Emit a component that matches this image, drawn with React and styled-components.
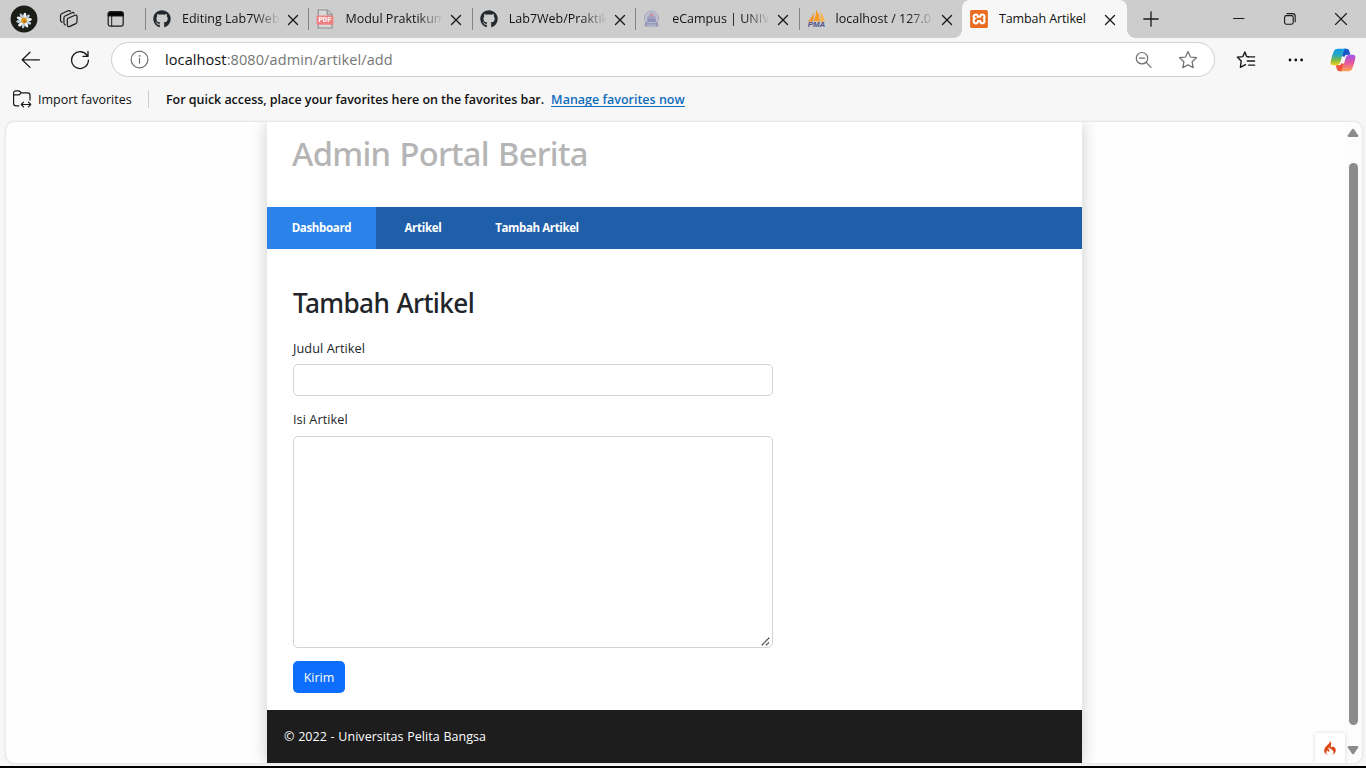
import React from "react";
import styled, { createGlobalStyle, css } from "styled-components";
import { FaGithub } from "react-icons/fa";
import { SiCodeigniter, SiXampp } from "react-icons/si";

const Global = createGlobalStyle`
  * { box-sizing: border-box; }
  html, body, #root { margin: 0; height: 100%; }
  body { overflow: hidden; background: #f7f7f7; color: #111; font-family: "Open Sans", "Noto Sans", sans-serif; }
  h1, h2, p { margin: 0; }
  svg { display: block; flex: none; }
`;

/* ---------- browser window ---------- */

const Window = styled.div`
  width: 1366px;
  height: 768px;
  display: flex;
  flex-direction: column;
  background: #f7f7f7;
  border-bottom: 2px solid #000;
`;

const TabStrip = styled.header`
  height: 38px;
  flex: none;
  display: flex;
  align-items: center;
  background: #cdcdcd;
`;

const StripTools = styled.div`
  width: 145px;
  padding-left: 10px;
  display: flex;
  align-items: center;
`;

const Tool = styled.span`
  margin-left: ${(p) => p.$gap}px;
`;

const Tab = styled.div`
  width: ${(p) => (p.$active ? 165 : 163.4)}px;
  height: 38px;
  display: flex;
  align-items: center;
  position: relative;
  padding-left: 7px;
  ${(p) =>
    p.$active
      ? css`
          background: #f7f7f7;
          border-radius: 8px 8px 0 0;
          &::before,
          &::after {
            content: "";
            position: absolute;
            bottom: 0;
            width: 8px;
            height: 8px;
          }
          &::before {
            left: -8px;
            background: radial-gradient(circle at 0 0, #cdcdcd 7.5px, #f7f7f7 8px);
          }
          &::after {
            right: -8px;
            background: radial-gradient(circle at 100% 0, #cdcdcd 7.5px, #f7f7f7 8px);
          }
        `
      : css`
          &::before {
            content: "";
            position: absolute;
            left: 0;
            top: 8px;
            width: 1px;
            height: 22px;
            background: #858585;
          }
        `}
`;

const TabIcon = styled.span`
  width: 20px;
  height: 20px;
  display: grid;
  place-items: center;
  color: #24292f;
`;

const TabTitle = styled.span`
  margin-left: 10px;
  width: 97px;
  overflow: hidden;
  white-space: nowrap;
  font-size: 12.5px;
  line-height: 20px;
  letter-spacing: ${(p) => p.$track || 0}px;
  color: #111;
  ${(p) =>
    p.$fade &&
    css`
      mask-image: linear-gradient(90deg, #000 72px, transparent 98px);
    `}
`;

const TabClose = styled.span`
  margin-left: 8px;
  display: grid;
  padding-top: 1px;
`;

const NewTab = styled.div`
  width: 48px;
  display: grid;
  place-items: center;
`;

const WindowButtons = styled.div`
  margin-left: auto;
  display: grid;
  grid-template-columns: repeat(3, 51px);
  place-items: center;
  padding-bottom: 1px;
`;

const Toolbar = styled.div`
  height: 43px;
  flex: none;
  display: flex;
  align-items: center;
  padding-left: 20px;
`;

const NavButtons = styled.div`
  width: 91px;
  display: flex;
  gap: 29px;
`;

const AddressBar = styled.div`
  width: 1104px;
  height: 35px;
  display: flex;
  align-items: center;
  padding: 0 16px 0 18px;
  border: 1px solid #cfcfcf;
  border-radius: 18px;
  background: #fff;
`;

const Url = styled.span`
  margin-left: 16px;
  flex: 1;
  font-size: 14.5px;
  line-height: 20px;
  letter-spacing: 0.1px;
  color: #767676;
  b {
    font-weight: 400;
    color: #111;
  }
`;

const AddressActions = styled.div`
  display: flex;
  align-items: center;
  gap: 25px;
`;

const ToolbarActions = styled.div`
  flex: 1;
  padding-left: 21px;
  display: flex;
  align-items: center;
`;

const FavoritesBar = styled.div`
  height: 40px;
  flex: none;
  display: flex;
  align-items: center;
  padding: 0 0 4px 12px;
  font-size: 12.5px;
  color: #111;
`;

const ImportFavorites = styled.span`
  margin-left: 6px;
  width: 110px;
`;

const Divider = styled.span`
  width: 1px;
  height: 18px;
  background: #cdcdcd;
`;

const FavoritesHint = styled.span`
  margin-left: 17px;
  font-weight: 600;
  letter-spacing: -0.035px;
`;

const FavoritesLink = styled.a`
  margin-left: 7px;
  height: 15px;
  line-height: 15px;
  font-weight: 600;
  color: #0f6cbd;
  border-bottom: 1px solid #0f6cbd;
`;

const Viewport = styled.div`
  position: relative;
  flex: 1;
  min-height: 0;
  margin: 0 3px 2px 5px;
  display: flex;
  overflow: hidden;
  border: 1px solid #e9e9e9;
  border-radius: 10px;
  background: #fefefe;
  box-shadow: 0 0 2px rgba(0, 0, 0, 0.1);
`;

const ScrollBar = styled.div`
  width: 17px;
  display: flex;
  flex-direction: column;
  align-items: center;
  padding: 6px 1px 7px 0;
  background: #fcfcfc;
`;

const ScrollThumb = styled.div`
  width: 9px;
  height: 562px;
  margin: 25px 0 20px;
  border-radius: 5px;
  background: #8b8b8b;
`;

const DebugBadge = styled.div`
  position: absolute;
  right: 17px;
  bottom: 0;
  width: 30px;
  height: 30px;
  display: grid;
  place-items: center;
  background: #fff;
  color: #dd4814;
  box-shadow: 0 0 4px rgba(0, 0, 0, 0.15);
`;

/* ---------- page ---------- */

const Document = styled.div`
  flex: 1;
  display: flex;
  padding-left: 261px;
`;

const Page = styled.div`
  width: 815px;
  display: flex;
  flex-direction: column;
  background: #fff;
  box-shadow: 0 0 16px rgba(0, 0, 0, 0.2);
`;

const PageHeader = styled.div`
  height: 85px;
  padding: 10px 25px;
`;

const SiteTitle = styled.h1`
  font: 500 32.7px/44px "Noto Sans", sans-serif;
  letter-spacing: -0.72px;
  word-spacing: 1.3px;
  color: #b5b5b5;
`;

const NavBar = styled.nav`
  height: 42px;
  display: flex;
  background: #1f5faa;
`;

const NavLink = styled.a`
  width: ${(p) => p.$width}px;
  display: flex;
  align-items: center;
  justify-content: center;
  padding-bottom: 2px;
  font-size: 11.5px;
  font-weight: 700;
  letter-spacing: ${(p) => p.$track}px;
  color: #fff;
  background: ${(p) => (p.$active ? "#2b83ea" : "transparent")};
`;

const Main = styled.main`
  height: 461px;
  padding: 35px 26px 0;
`;

const Heading = styled.h2`
  font: 500 26.2px/38px "Noto Sans", sans-serif;
  letter-spacing: -0.63px;
  word-spacing: 1px;
  color: #212529;
`;

const Field = styled.div`
  display: flex;
  flex-direction: column;
  margin-top: ${(p) => p.$gap}px;
`;

const FieldLabel = styled.label`
  height: 20px;
  line-height: 20px;
  margin-bottom: ${(p) => p.$below}px;
  font-size: 12.7px;
  letter-spacing: 0.07px;
  color: #212529;
`;

const control = css`
  width: 480px;
  border: 1px solid #ced4da;
  border-radius: 5px;
  background: #fff;
`;

const Input = styled.input`
  ${control}
  height: 32px;
`;

const TextAreaFrame = styled.div`
  ${control}
  height: 212px;
  display: flex;
  align-items: flex-end;
  justify-content: flex-end;
  padding: 0 2px 1px 0;
`;

const Submit = styled.button`
  display: block;
  width: 52px;
  height: 32px;
  margin-top: 13px;
  padding: 1px 0 0;
  border: 0;
  border-radius: 5px;
  background: #0d6efd;
  color: #fff;
  font: 12.5px "Open Sans", sans-serif;
`;

const Footer = styled.footer`
  flex: 1;
  display: flex;
  align-items: center;
  padding-left: 17px;
  background: #1d1d1d;
  color: #fff;
  font-size: 12.5px;
  letter-spacing: 0.04px;
  word-spacing: 0.4px;
`;

/* ---------- icons ---------- */

const Line = styled.svg`
  fill: none;
  stroke: ${(p) => p.$color || "#1a1a1a"};
  stroke-width: ${(p) => p.$weight || 1.2};
  stroke-linecap: round;
  stroke-linejoin: round;
`;

const Avatar = () => (
  <svg width="28" height="28" viewBox="0 0 28 28">
    <circle cx="14" cy="14" r="13.4" fill="#1b1d17" />
    {[0, 36, 72, 108, 144, 180, 216, 252, 288, 324].map((a) => (
      <ellipse key={a} cx="14" cy="10.2" rx="1.5" ry="3.6" fill={a % 72 ? "#b5cbdc" : "#f4f5f2"} transform={`translate(0 1) rotate(${a + 8} 14 14.5)`} />
    ))}
    <circle cx="14" cy="15.5" r="3" fill="#e2a01c" />
    <circle cx="14.5" cy="16.3" r="1.5" fill="#bd7410" />
  </svg>
);

const Workspaces = () => (
  <Line width="20" height="20" viewBox="0 0 20 20">
    <path d="M9.1 9.2 15.9 6.2Q18 5.4 18 7.6V12.6Q18 14 16.8 14.6L10.8 17.4Q8.3 18.2 8.3 15.8V10.6Q8.3 9.6 9.1 9.2Z" />
    <path d="M6.2 16Q4.9 15.3 4.9 13.8V8.8Q4.9 7.6 6 7L13 3.7Q14.5 3.1 15 4.2" />
    <path d="M3 13.3Q1.5 12.5 1.5 11V6.6Q1.5 5.4 2.6 4.8L9 1.8Q10.8 1.1 11.4 2.4" />
  </Line>
);

const TabActions = () => (
  <Line width="18" height="18" viewBox="0 0 18 18">
    <rect x="1.2" y="1.8" width="15" height="14.4" rx="2.2" />
    <path d="M1.2 6V4Q1.2 1.8 3.4 1.8H14Q16.2 1.8 16.2 4V6Z" fill="#000" />
    <path d="M4.7 6V16" strokeWidth="1" />
  </Line>
);

const Cross = ({ size = 10, weight = 1.4 }) => (
  <Line width={size + 2} height={size + 2} viewBox={`-1 -1 ${size + 2} ${size + 2}`} $weight={weight}>
    <path d={`M0.5 0.5 ${size - 0.5} ${size - 0.5}M${size - 0.5} 0.5 0.5 ${size - 0.5}`} />
  </Line>
);

const Plus = () => (
  <Line width="16" height="16" viewBox="0 0 16 16" $weight={1.3}>
    <path d="M8 .8V15.2M.8 8H15.2" />
  </Line>
);

const Minimize = () => (
  <Line width="12" height="12" viewBox="0 0 12 12" $weight={1}>
    <path d="M.5 5.5H11" />
  </Line>
);

const Restore = () => (
  <Line width="12" height="12" viewBox="0 0 12 12" $weight={1.1}>
    <rect x=".6" y="2.6" width="8.6" height="8.6" rx="1.6" />
    <path d="M3 .6H8.6Q11.2 .6 11.2 3.2V8.7" />
  </Line>
);

const PdfIcon = () => (
  <svg width="18" height="20" viewBox="0 0 18 20">
    <path d="M2.2 1H11.4L16 5.6V19H2.2Z" fill="#d9d9d9" stroke="#8b8b8b" strokeWidth="1.1" />
    <path d="M11.2 1V5.8H16" fill="#c9c9c9" stroke="#8b8b8b" strokeWidth="1.1" />
    <rect x=".6" y="6.6" width="16.8" height="9.2" rx="1" fill="#ef8082" />
    <text x="9" y="13.4" textAnchor="middle" fontSize="6.4" fontWeight="700" fontFamily="Liberation Mono" fill="#fff" textLength="13" lengthAdjust="spacingAndGlyphs">PDF</text>
  </svg>
);

const CampusCrest = () => (
  <svg width="18" height="18" viewBox="0 0 18 18">
    <circle cx="8.5" cy="8" r="7" fill="#c3c3cf" stroke="#a8a8be" strokeWidth="1" />
    <circle cx="8.5" cy="7" r="4.3" fill="#b5b5cb" />
    <path d="M8.5 2 10 5.5 13.6 7.7H3.4L7 5.5Z" fill="#9c9cbc" />
    <circle cx="8.5" cy="5.2" r="1.2" fill="#dc8c86" />
    <path d="M4.3 8.4H12.8V12H4.3Z" fill="#8e90b6" />
    <path d="M2.4 11.8Q8.5 14.3 14.6 11.8L15.6 16.6H1.4Z" fill="#9597bb" />
    <path d="M4 15.1H13" stroke="#c8c8d8" strokeWidth=".8" />
  </svg>
);

const PmaIcon = () => (
  <svg width="20" height="20" viewBox="0 0 20 20">
    <path d="M7.6 3.2Q8.6 8 6.6 12H2Q6 9 7.6 3.2Z" fill="#f0922c" />
    <path d="M10 1Q14.4 5.5 13.4 12H7.3Q10.3 7 10 1Z" fill="#f89c27" />
    <path d="M14.2 2.5Q18 7 18.8 12H14.1Q15.2 7 14.2 2.5Z" fill="#fab252" />
    <path d="M2 12.6Q10 11.2 18.6 12.7" stroke="#dfa05b" strokeWidth=".7" fill="none" />
    <text x="10.4" y="18.4" textAnchor="middle" fontSize="6.8" fontWeight="700" fontStyle="italic" fontFamily="Liberation Sans" fill="#4f5289" textLength="17.5" lengthAdjust="spacingAndGlyphs">PMA</text>
  </svg>
);

const XamppTile = styled.span`
  width: 18px;
  height: 18px;
  display: grid;
  place-items: center;
  border-radius: 2px;
  background: #fff;
  color: #ea6c20;
`;

const Back = () => (
  <Line width="21" height="20" viewBox="0 0 21 20" $weight={1.3}>
    <path d="M10 2.2 2.2 9.8 10 17.4M2.2 9.8H19.5" />
  </Line>
);

const Reload = () => (
  <Line width="20" height="20" viewBox="0 0 20 20" $weight={1.3}>
    <path d="M17.4 6.1A8.4 8.4 0 1 0 18.4 10.2M18 1.5V6.4H13" />
  </Line>
);

const Info = () => (
  <Line width="19" height="19" viewBox="0 0 19 19" $color="#6e6e6e">
    <circle cx="9.5" cy="9.5" r="8.4" />
    <path d="M9.5 8.4V13.2" />
    <circle cx="9.5" cy="5.9" r=".5" fill="#6e6e6e" strokeWidth=".6" />
  </Line>
);

const ZoomOut = () => (
  <Line width="18" height="18" viewBox="0 0 18 18" $color="#6e6e6e">
    <circle cx="7" cy="7.2" r="5.7" />
    <path d="M4.4 7.2H9.6M11.2 11.4 16 16.3" />
  </Line>
);

const starPath = "M10 1.6 12.5 7 18.4 7.7 14.1 11.8 15.2 17.6 10 14.8 4.8 17.6 5.9 11.8 1.6 7.7 7.5 7Z";

const Star = () => (
  <Line width="20" height="20" viewBox="0 0 20 20" $color="#6e6e6e">
    <path d={starPath} />
  </Line>
);

const Collections = () => (
  <Line width="20" height="20" viewBox="0 0 20 20" $weight={1.4}>
    <path d="M12.4 6.8 10.6 6.6 8.9 2 6.8 6.6 1.4 7.3 5.2 11 4.4 17.3 9.4 14.6" />
    <path d="M12.6 6.9H18.6M11.4 11H18.6M12.6 15.1H18.6" />
  </Line>
);

const Dots = () => (
  <svg width="16" height="4" viewBox="0 0 16 4">
    {[2, 7.8, 13.6].map((x) => <circle key={x} cx={x} cy="2" r="1.4" fill="#111" />)}
  </svg>
);

const Copilot = () => (
  <svg width="26" height="24" viewBox="0 0 26 24">
    <defs>
      <linearGradient id="cool" x1="0" y1="0" x2="0" y2="1">
        <stop offset="0" stopColor="#149bea" />
        <stop offset=".4" stopColor="#29a9b8" />
        <stop offset=".7" stopColor="#84b93e" />
        <stop offset="1" stopColor="#f4cf1c" />
      </linearGradient>
      <linearGradient id="warm" x1="0" y1="0" x2="0" y2="1">
        <stop offset="0" stopColor="#a052ee" />
        <stop offset=".5" stopColor="#e6589c" />
        <stop offset="1" stopColor="#ffa34f" />
      </linearGradient>
    </defs>
    <path d="M14 .8H16.6Q18.6 .8 19.2 2.8L20.4 6.8H17Q15 6.8 14.3 9L12 8Z" fill="#1756c4" />
    <path d="M12 23.2H9.4Q7.4 23.2 6.8 21L5.7 17.2H9Q11 17.2 11.7 15L14 16Z" fill="#f0533e" />
    <path d="M7.7.8H16.2Q14.2 1 13.5 3.2L10.2 14.6Q9.4 17.2 6.8 17.2H3.2Q0 17.2.7 13.4Q2 7.3 4 2.8Q5 .8 7.7.8Z" fill="url(#cool)" />
    <path d="M18.3 23.2H9.8Q11.8 23 12.5 20.8L15.8 9.4Q16.6 6.8 19.2 6.8H22.8Q26 6.8 25.3 10.6Q24 16.7 22 21.2Q21 23.2 18.3 23.2Z" fill="url(#warm)" />
  </svg>
);

const ImportFolder = () => (
  <Line width="20" height="20" viewBox="0 0 20 20">
    <path d="M6.8 16.9H4Q1.6 16.9 1.6 14.5V4.2Q1.6 1.8 4 1.8H6.4Q7.4 1.8 8 2.5L9.3 3.8H15.6Q18 3.8 18 6.2V11.2M1.8 5.8H6.3Q7.4 5.8 8 5.1L9.3 3.8" />
    <path d="M9.6 15.5H18.4M11.5 13.2 9.3 15.5 11.5 17.8M16.5 13.2 18.7 15.5 16.5 17.8" />
  </Line>
);

const Arrow = ({ down }) => (
  <svg width="12" height="10" viewBox="0 0 12 10">
    <path
      d="M5 1.2Q6 .2 7 1.2L11.3 7.4Q11.6 9 10.4 9H1.6Q.4 9 .7 7.4Z"
      fill="#8b8b8b"
      transform={down ? "rotate(180 6 5)" : undefined}
    />
  </svg>
);

const ResizeGrip = () => (
  <Line width="9" height="9" viewBox="0 0 9 9" $color="#444" $weight={1.4}>
    <path d="M.8 8.2 8.2 .8M5 8.2 8.2 5" strokeDasharray="1.8 .4" strokeLinecap="butt" />
  </Line>
);

const tabs = [
  { title: "Editing Lab7Web", icon: <FaGithub size={18} /> },
  { title: "Modul Praktikum", icon: <PdfIcon /> },
  { title: "Lab7Web/Praktik", icon: <FaGithub size={18} /> },
  { title: "eCampus | UNIV", icon: <CampusCrest /> },
  { title: "localhost / 127.0", icon: <PmaIcon /> },
];

export default function App() {
  return (
    <Window>
      <Global />
      <TabStrip>
        <StripTools>
          <Avatar />
          <Tool $gap={21}><Workspaces /></Tool>
          <Tool $gap={28}><TabActions /></Tool>
        </StripTools>
        {tabs.map((t) => (
          <Tab key={t.title}>
            <TabIcon>{t.icon}</TabIcon>
            <TabTitle $fade>{t.title}</TabTitle>
            <TabClose><Cross /></TabClose>
          </Tab>
        ))}
        <Tab $active>
          <TabIcon><XamppTile><SiXampp size={18} /></XamppTile></TabIcon>
          <TabTitle $track={-0.1}>Tambah Artikel</TabTitle>
          <TabClose><Cross /></TabClose>
        </Tab>
        <NewTab><Plus /></NewTab>
        <WindowButtons>
          <Minimize />
          <Restore />
          <Cross size={12} weight={1.1} />
        </WindowButtons>
      </TabStrip>

      <Toolbar>
        <NavButtons>
          <Back />
          <Reload />
        </NavButtons>
        <AddressBar>
          <Info />
          <Url><b>localhost</b>:8080/admin/artikel/add</Url>
          <AddressActions>
            <ZoomOut />
            <Star />
          </AddressActions>
        </AddressBar>
        <ToolbarActions>
          <Collections />
          <Tool $gap={32}><Dots /></Tool>
          <Tool $gap={26}><Copilot /></Tool>
        </ToolbarActions>
      </Toolbar>

      <FavoritesBar>
        <ImportFolder />
        <ImportFavorites>Import favorites</ImportFavorites>
        <Divider />
        <FavoritesHint>For quick access, place your favorites here on the favorites bar.</FavoritesHint>
        <FavoritesLink>Manage favorites now</FavoritesLink>
      </FavoritesBar>

      <Viewport>
        <Document>
          <Page>
            <PageHeader>
              <SiteTitle>Admin Portal Berita</SiteTitle>
            </PageHeader>
            <NavBar>
              <NavLink $active $width={109} $track={-0.33}>Dashboard</NavLink>
              <NavLink $width={94} $track={-0.27}>Artikel</NavLink>
              <NavLink $width={134} $track={-0.38}>Tambah Artikel</NavLink>
            </NavBar>
            <Main>
              <Heading>Tambah Artikel</Heading>
              <Field $gap={16}>
                <FieldLabel $below={6}>Judul Artikel</FieldLabel>
                <Input />
              </Field>
              <Field $gap={13}>
                <FieldLabel $below={7}>Isi Artikel</FieldLabel>
                <TextAreaFrame><ResizeGrip /></TextAreaFrame>
              </Field>
              <Submit>Kirim</Submit>
            </Main>
            <Footer>© 2022 - Universitas Pelita Bangsa</Footer>
          </Page>
        </Document>
        <ScrollBar>
          <Arrow />
          <ScrollThumb />
          <Arrow down />
        </ScrollBar>
        <DebugBadge><SiCodeigniter size={14} /></DebugBadge>
      </Viewport>
    </Window>
  );
}
